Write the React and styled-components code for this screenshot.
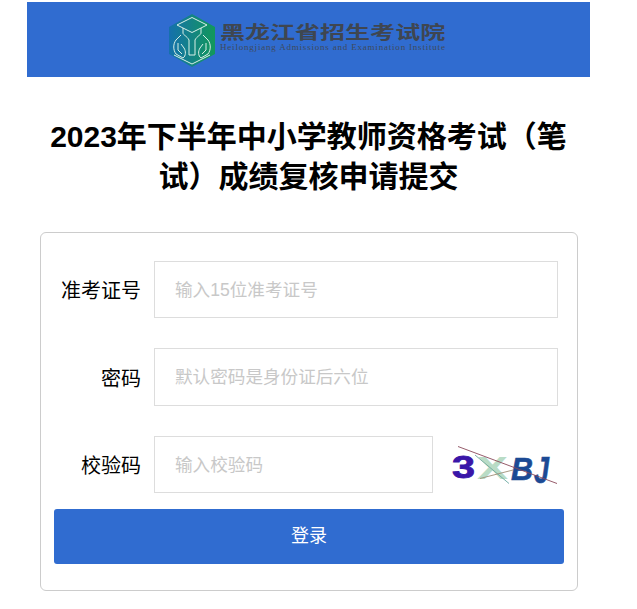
import React from "react";
import styled, { createGlobalStyle } from "styled-components";

const GlobalStyle = createGlobalStyle`
  html, body {
    margin: 0;
    padding: 0;
    background: #fff;
    font-family: "Liberation Sans", "Noto Sans CJK SC", sans-serif;
  }
  * { box-sizing: border-box; }
`;

const Page = styled.div`
  width: 637px;
  height: 609px;
  padding-top: 2px;
  overflow: hidden;
`;

const Banner = styled.header`
  width: 563px;
  height: 75px;
  margin-left: 27px;
  background: #306cd0;
  display: flex;
  align-items: center;
  padding: 1px 0 0 142px;
`;

const LogoText = styled.div`
  margin-left: 5px;
  width: 226px;
  padding-bottom: 4px;
`;

const LogoName = styled.div`
  font-size: 18px;
  line-height: 20px;
  font-weight: 700;
  white-space: nowrap;
  color: #3f4650;
  transform: scaleX(1.39);
  transform-origin: left center;
`;

const LogoEnglish = styled.div`
  margin-top: -1px;
  font-family: "Liberation Serif", serif;
  font-size: 9px;
  line-height: 11px;
  letter-spacing: 0.8px;
  white-space: nowrap;
  color: #3f4a5c;
`;

const Title = styled.h1`
  width: 563px;
  margin: 40px 0 0 27px;
  padding: 0 20px;
  font-size: 30px;
  line-height: 40px;
  font-weight: 700;
  text-align: center;
  color: #000;
`;

const Card = styled.form`
  width: 538px;
  height: 359px;
  margin: 35px 0 0 40px;
  padding: 28px 13px 0;
  border: 1px solid #ccc;
  border-radius: 6px;
  background: #fff;
`;

const Row = styled.div`
  display: flex;
  align-items: center;
  height: ${(p) => p.$height || 57}px;
  margin-bottom: ${(p) => p.$gap || 30}px;
`;

const Label = styled.label`
  width: 87px;
  font-size: 20px;
  text-align: right;
  color: #000;
  flex: none;
`;

const Input = styled.input`
  display: block;
  width: ${(p) => p.$width}px;
  height: 100%;
  margin-left: 13px;
  padding: 1px 20px 0;
  border: 1px solid #ddd;
  border-radius: 0;
  outline: none;
  background: #fff;
  font-family: inherit;
  font-size: 17.6px;
  color: #333;
  &::placeholder {
    color: #c8c8c8;
    opacity: 1;
  }
`;

const Captcha = styled.svg`
  display: block;
  flex: none;
  margin-left: 17px;
`;

const Submit = styled.button`
  display: block;
  width: 510px;
  height: 55px;
  margin-top: 16px;
  padding: 0 0 6px;
  border: 0;
  border-radius: 3px;
  background: #306cd0;
  color: #fff;
  font-family: inherit;
  font-size: 18px;
`;

function Logo() {
  return (
    <svg width="46" height="53" viewBox="0 0 46 53">
      <defs>
        <linearGradient id="hex" x1="0" x2="1" y1="0" y2="0">
          <stop offset="0" stopColor="#1570ad" />
          <stop offset="1" stopColor="#12985a" />
        </linearGradient>
      </defs>
      <path d="M23 0 46 13V40L23 53 0 40V13Z" fill="url(#hex)" />
      <g fill="none" stroke="#d8efe6" strokeWidth="1">
        <path d="M23 3.500 38 11 23 18.500 8 11Z" />
        <path d="M14 14V19C14 21 18 22 20 26V41H26V26C28 22 32 21 32 19V14" />
        <path d="M12 21 7 26C4 30 4 36 7 40L14 44C17 42 17 37 15 34L12 30" />
        <path d="M34 21 39 26C42 30 42 36 39 40L32 44C29 42 29 37 31 34L34 30" />
        <path d="M9 29 9 36 13 40M37 29 37 36 33 40" />
        <path d="M5 41 23 50 41 41" />
      </g>
    </svg>
  );
}

function CaptchaImage() {
  const glyph = { fontFamily: "Liberation Sans", fontWeight: 700, lengthAdjust: "spacingAndGlyphs" };
  return (
    <Captcha width="112" height="50" viewBox="0 0 112 50">
      <text {...glyph} x="2" y="38" fontSize="32" textLength="23" fill="#3a16a8" stroke="#3a16a8" strokeWidth="0.8">3</text>
      <text {...glyph} x="27" y="38.500" fontSize="31" textLength="31" fill="#b9dcc6">X</text>
      <text {...glyph} x="61" y="40" fontSize="32" fontStyle="italic" textLength="22" fill="#1c4a94" stroke="#1c4a94" strokeWidth="0.6">B</text>
      <text {...glyph} x="84" y="43" fontSize="36" fontStyle="italic" textLength="15" fill="#1c4a94" stroke="#1c4a94" strokeWidth="0.6">J</text>
      <g fill="none" strokeWidth="0.9">
        <path d="M8 6.500 107 43.500" stroke="#8a4a5a" />
        <path d="M25 15 59 43.500" stroke="#6aa8a0" />
        <path d="M30 38.500 63 30" stroke="#a09078" />
      </g>
    </Captcha>
  );
}

export default function App() {
  return (
    <Page>
      <GlobalStyle />
      <Banner>
        <Logo />
        <LogoText>
          <LogoName>黑龙江省招生考试院</LogoName>
          <LogoEnglish>Heilongjiang Admissions and Examination Institute</LogoEnglish>
        </LogoText>
      </Banner>
      <Title>2023年下半年中小学教师资格考试（笔试）成绩复核申请提交</Title>
      <Card onSubmit={(e) => e.preventDefault()}>
        <Row>
          <Label htmlFor="zkzh">准考证号</Label>
          <Input id="zkzh" $width={404} placeholder="输入15位准考证号" />
        </Row>
        <Row $height={58}>
          <Label htmlFor="mm">密码</Label>
          <Input id="mm" $width={404} placeholder="默认密码是身份证后六位" />
        </Row>
        <Row $gap={1}>
          <Label htmlFor="jym">校验码</Label>
          <Input id="jym" $width={279} placeholder="输入校验码" />
          <CaptchaImage />
        </Row>
        <Submit type="submit">登录</Submit>
      </Card>
    </Page>
  );
}
